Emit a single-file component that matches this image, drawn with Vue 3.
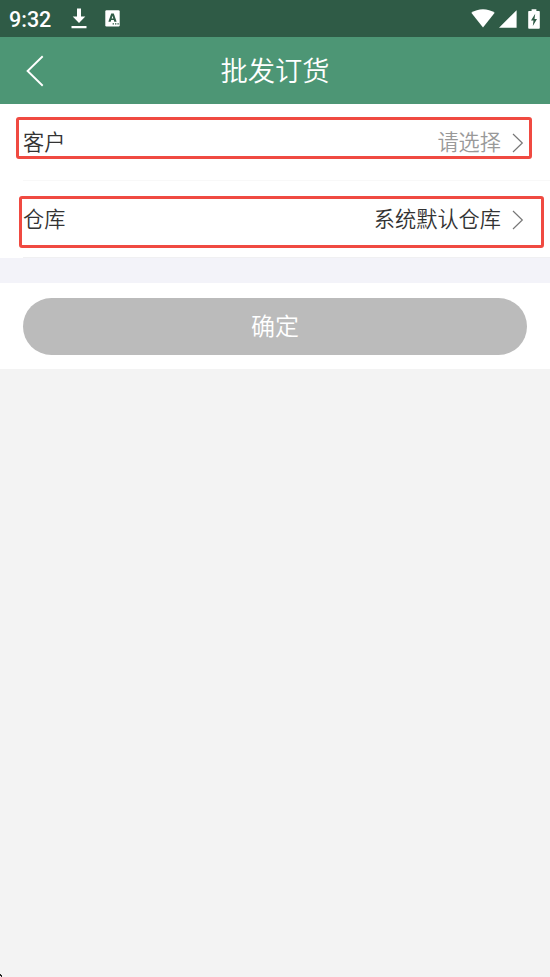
<script setup>
const rows = [
  { id: 'customer', label: '客户', value: '请选择', placeholder: true },
  { id: 'warehouse', label: '仓库', value: '系统默认仓库', placeholder: false },
]
</script>

<template>
  <div class="screen">
    <div class="status">
      <span class="time">9:32</span>
      <svg class="download" width="16" height="22" viewBox="0 0 16 22">
        <path d="M6 0.5h4v8h4.3L8 15 1.7 8.5H6z M0.5 18h15v2.2h-15z" fill="#fff" />
      </svg>
      <svg class="app-badge" width="15" height="17" viewBox="0 0 15 17">
        <rect x="0.3" y="0.3" width="14.4" height="16.2" rx="1.2" fill="#fff" />
        <path d="M6.2 3.5h2.6l2.8 8.2H9.3l-.5-1.6H6.2l-.5 1.6H3.4zM7.5 5.8 6.7 8.4h1.6z" fill="#2f5b46" fill-rule="evenodd" />
        <path d="M7.6 13.2h1.4v1.4H7.6zM10 13.2h1.4v1.4H10zM12.4 13.2h1.4v1.4h-1.4z" fill="#2f5b46" />
      </svg>
      <svg class="wifi" width="24" height="19" viewBox="0 0 24 19">
        <path d="M0.3 3.8C7 -1.1 17 -1.1 23.7 3.8L12 18.4z" fill="#fff" />
      </svg>
      <svg class="signal" width="18" height="18" viewBox="0 0 18 18">
        <path d="M17.6 0.2v17.6H0z" fill="#fff" />
      </svg>
      <svg class="battery" width="12" height="20" viewBox="0 0 12 20">
        <path d="M3.6 0.3h4.8V2H11q.8 0 .8.8v16q0 .9-.8.9H1q-.8 0-.8-.9v-16Q.2 2 1 2h2.6z" fill="#fff" />
        <path d="M7.2 4.8 3 11.6h2.5L4.8 17 9 10H6.5z" fill="#2f5b46" />
      </svg>
    </div>
    <div class="header">
      <svg class="back" width="18" height="32" viewBox="0 0 18 32">
        <path d="M16.7 1.3 1.6 16l15.1 14.7" fill="none" stroke="#fff" stroke-width="1.9" />
      </svg>
      <span class="title">批发订货</span>
    </div>
    <div class="form">
      <div v-for="row in rows" :key="row.id" class="row">
        <span class="label">{{ row.label }}</span>
        <span class="value" :class="{ muted: row.placeholder }">{{ row.value }}</span>
        <svg class="arrow" width="12" height="20" viewBox="0 0 12 20">
          <path d="M1 1 10.3 10 1 19" fill="none" stroke="#777" stroke-width="1.2" />
        </svg>
        <div class="mark" :class="row.id"></div>
      </div>
    </div>
    <div class="divider"></div>
    <div class="footer">
      <button class="submit" type="button">确定</button>
    </div>
    <svg class="corner" width="2" height="3" viewBox="0 0 2 3">
      <path d="M0 0h1v1h1v2H1V2H0z" fill="#222" />
    </svg>
  </div>
</template>

<style>
body {
  background: #f3f3f3;
}
</style>

<style scoped>
.screen {
  display: flex;
  flex-direction: column;
  min-height: 977px;
  background: #f3f3f3;
  font-family: "Noto Sans CJK SC", sans-serif;
  font-weight: 350;
}
.status {
  display: flex;
  align-items: center;
  box-sizing: border-box;
  height: 37px;
  padding: 0 10px 0 9px;
  background: #2f5b46;
}
.time {
  width: 62px;
  padding-top: 2px;
  color: #fff;
  font-family: Roboto, sans-serif;
  font-size: 21.5px;
  font-weight: 500;
  line-height: 35px;
}
.app-badge {
  margin-left: 18px;
}
.wifi {
  margin-left: auto;
}
.signal {
  margin-left: 4px;
  margin-top: 1px;
}
.battery {
  margin-left: 11px;
}
.header {
  display: grid;
  grid-template-columns: 26px 18px 1fr 44px;
  align-items: center;
  height: 67px;
  background: #4d9675;
}
.back {
  grid-column: 2;
}
.title {
  grid-column: 3;
  padding-bottom: 2px;
  color: #fff;
  font-size: 27.3px;
  line-height: 65px;
  text-align: center;
}
.form {
  background: #fff;
}
.row {
  position: relative;
  display: flex;
  align-items: center;
  box-sizing: border-box;
  height: 77px;
  padding: 0 26px 0 23px;
  color: #333;
  font-size: 21.2px;
  line-height: 30px;
  background: linear-gradient(#f8f8f8, #f8f8f8) 23px 100% / 527px 1px no-repeat;
}
.row:last-child {
  background-image: linear-gradient(#f0f0f2, #f0f0f2);
}
.label,
.value {
  padding-bottom: 3px;
}
.value {
  margin-left: auto;
}
.value.muted {
  color: #999;
}
.arrow {
  margin-left: 11px;
}
.mark {
  position: absolute;
  box-sizing: border-box;
  border: 3px solid #f04a41;
  border-radius: 3px;
}
.mark.customer {
  left: 16px;
  right: 18px;
  top: 13px;
  height: 42px;
}
.mark.warehouse {
  left: 19px;
  right: 6px;
  top: 15px;
  height: 52px;
}
.divider {
  height: 25px;
  background: #f3f3f9;
}
.footer {
  box-sizing: border-box;
  height: 86px;
  padding: 15px 23px 14px;
  background: #fff;
}
.submit {
  display: block;
  width: 100%;
  height: 57px;
  padding: 0 0 3px;
  border: 0;
  border-radius: 29px;
  background: #bbb;
  color: #fff;
  font: inherit;
  font-size: 24px;
  line-height: 54px;
}
.corner {
  margin-top: auto;
}
</style>
